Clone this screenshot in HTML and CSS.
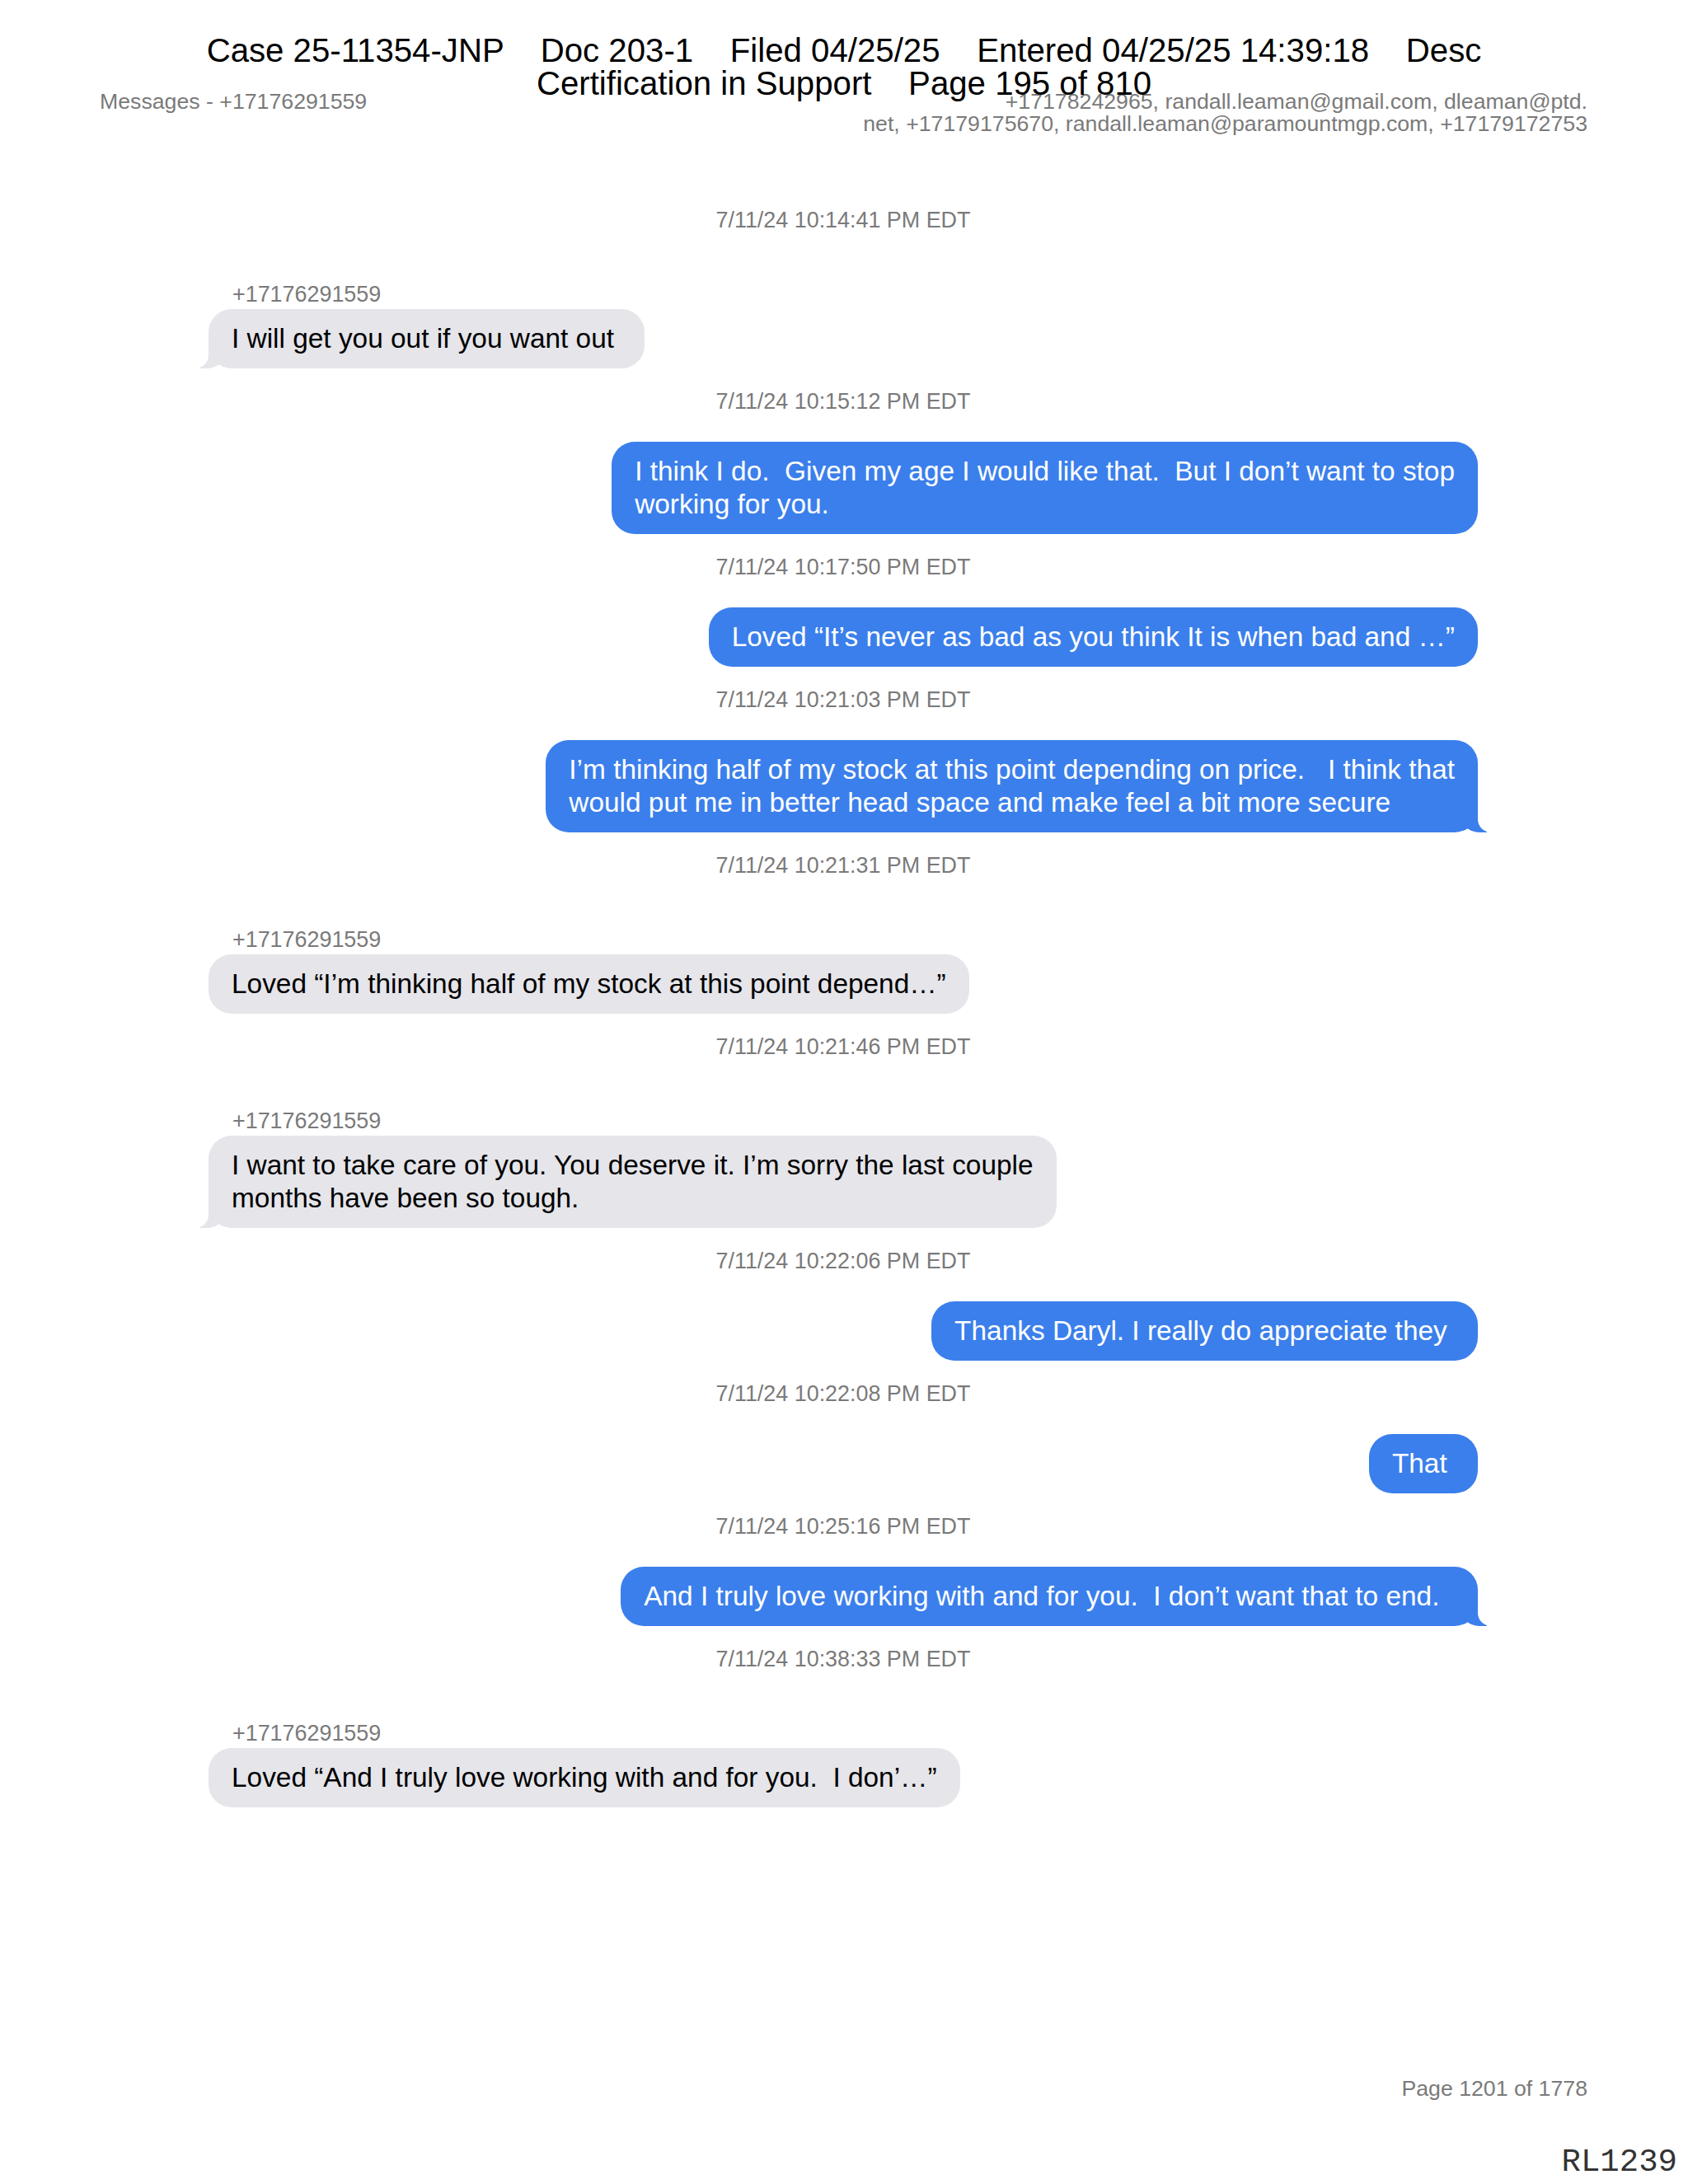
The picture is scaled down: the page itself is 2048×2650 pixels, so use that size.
FILE: index.html
```
<!DOCTYPE html>
<html lang="en">
<head>
<meta charset="utf-8">
<title>Messages - +17176291559</title>
<link rel="stylesheet" href="styles.css">
</head>
<body>
<div class="page">
  <div class="court-stamp">
    <div class="stamp-line">Case 25-11354-JNP    Doc 203-1    Filed 04/25/25    Entered 04/25/25 14:39:18    Desc</div>
    <div class="stamp-line">Certification in Support    Page 195 of 810</div>
  </div>

  <header class="doc-head">
    <div class="doc-title">Messages - +17176291559</div>
    <div class="doc-contacts">+17178242965, randall.leaman@gmail.com, dleaman@ptd.<br>net, +17179175670, randall.leaman@paramountmgp.com, +17179172753</div>
  </header>

  <main class="thread">
    <div class="ts first">7/11/24 10:14:41 PM EDT</div>
    <div class="msg in with-sender">
      <div class="sender">+17176291559</div>
      <div class="bubble gray tail-l">I will get you out if you want out </div>
    </div>

    <div class="ts">7/11/24 10:15:12 PM EDT</div>
    <div class="msg out">
      <div class="bubble blue">I think I do.  Given my age I would like that.  But I don’t want to stop<br>working for you.</div>
    </div>

    <div class="ts">7/11/24 10:17:50 PM EDT</div>
    <div class="msg out">
      <div class="bubble blue">Loved “It’s never as bad as you think It is when bad and …”</div>
    </div>

    <div class="ts">7/11/24 10:21:03 PM EDT</div>
    <div class="msg out">
      <div class="bubble blue tail-r">I’m thinking half of my stock at this point depending on price.   I think that<br>would put me in better head space and make feel a bit more secure</div>
    </div>

    <div class="ts">7/11/24 10:21:31 PM EDT</div>
    <div class="msg in with-sender">
      <div class="sender">+17176291559</div>
      <div class="bubble gray">Loved “I’m thinking half of my stock at this point depend…”</div>
    </div>

    <div class="ts">7/11/24 10:21:46 PM EDT</div>
    <div class="msg in with-sender">
      <div class="sender">+17176291559</div>
      <div class="bubble gray tail-l">I want to take care of you. You deserve it. I’m sorry the last couple<br>months have been so tough.</div>
    </div>

    <div class="ts">7/11/24 10:22:06 PM EDT</div>
    <div class="msg out">
      <div class="bubble blue">Thanks Daryl. I really do appreciate they </div>
    </div>

    <div class="ts">7/11/24 10:22:08 PM EDT</div>
    <div class="msg out">
      <div class="bubble blue">That </div>
    </div>

    <div class="ts">7/11/24 10:25:16 PM EDT</div>
    <div class="msg out">
      <div class="bubble blue tail-r">And I truly love working with and for you.  I don’t want that to end.  </div>
    </div>

    <div class="ts">7/11/24 10:38:33 PM EDT</div>
    <div class="msg in with-sender">
      <div class="sender">+17176291559</div>
      <div class="bubble gray">Loved “And I truly love working with and for you.  I don’…”</div>
    </div>
  </main>

  <footer class="doc-foot">Page 1201 of 1778</footer>

  <div class="bates">RL1239</div>
</div>
</body>
</html>
```
FILE: styles.css
```
* {
  box-sizing: border-box;
}

html, body {
  margin: 0;
  padding: 0;
  background: #ffffff;
}

.page {
  position: relative;
  width: 2048px;
  height: 2650px;
  overflow: hidden;
  display: flex;
  flex-direction: column;
  font-family: "Liberation Sans", Arial, Helvetica, sans-serif;
  color: #000;
}

/* Court filing stamp laid over the page */
.court-stamp {
  position: absolute;
  top: 42px;
  left: 0;
  right: 0;
  text-align: center;
  font-size: 40.2px;
  line-height: 40px;
  color: #000;
  z-index: 2;
}

.stamp-line {
  white-space: pre;
}

.doc-head {
  display: flex;
  justify-content: space-between;
  align-items: flex-start;
  padding: 110px 122px 0 121px;
  font-size: 26.7px;
  line-height: 27px;
  color: #7a7a7a;
}

.doc-contacts {
  text-align: right;
}

.thread {
  display: flex;
  flex-direction: column;
  margin: 87px 255px 0 253px;
}

.ts {
  text-align: center;
  font-size: 26.9px;
  line-height: 32px;
  color: #7a7a7a;
  margin-top: 24px;
}

.ts.first {
  margin-top: 0;
}

.msg {
  display: flex;
  flex-direction: column;
  margin-top: 33px;
}

.msg.with-sender {
  margin-top: 58px;
}

.msg.in {
  align-items: flex-start;
}

.msg.out {
  align-items: flex-end;
}

.sender {
  font-size: 26.9px;
  line-height: 32px;
  color: #7a7a7a;
  padding-left: 29px;
  margin-bottom: 2px;
}

.bubble {
  position: relative;
  padding: 16px 28px;
  font-size: 33.4px;
  line-height: 40px;
  border-radius: 28px;
  white-space: pre;
}

.bubble.gray {
  background: #e5e5ea;
  color: #000;
}

.bubble.blue {
  background: #3b7fec;
  color: #fff;
}

/* iMessage tails */
.tail-l::before,
.tail-l::after,
.tail-r::before,
.tail-r::after {
  content: "";
  position: absolute;
  bottom: 0;
  height: 32px;
}

.tail-l::before {
  left: -11px;
  width: 30px;
  background: #e5e5ea;
  border-bottom-right-radius: 22px 16px;
}

.tail-l::after {
  left: -30px;
  width: 30px;
  background: #fff;
  border-bottom-right-radius: 16px;
}

.tail-r::before {
  right: -11px;
  width: 30px;
  background: #3b7fec;
  border-bottom-left-radius: 22px 16px;
}

.tail-r::after {
  right: -30px;
  width: 30px;
  background: #fff;
  border-bottom-left-radius: 16px;
}

.doc-foot {
  margin-top: auto;
  padding: 0 122px 100px 0;
  text-align: right;
  font-size: 26.7px;
  line-height: 32px;
  color: #7a7a7a;
}

.bates {
  position: absolute;
  top: 2605px;
  right: 13px;
  font-family: "Liberation Mono", "Courier New", monospace;
  font-size: 39px;
  line-height: 39px;
  color: #333;
}
```
